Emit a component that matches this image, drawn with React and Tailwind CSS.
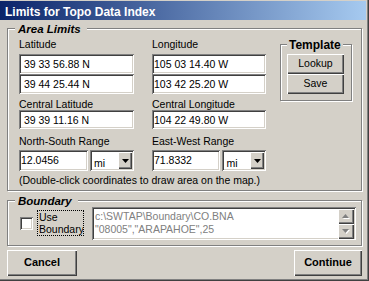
import React from "react";

const sunken =
  "shadow-[inset_1px_1px_0_#808080,inset_-1px_-1px_0_#ffffff,inset_2px_2px_0_#404040,inset_-2px_-2px_0_#d4d0c8]";
const raised =
  "shadow-[inset_1px_1px_0_#ffffff,inset_-1px_-1px_0_#404040,inset_-2px_-2px_0_#808080]";
const etched =
  "border border-[#808080] shadow-[inset_1px_1px_0_#ffffff,1px_1px_0_#ffffff]";

function Field({ value, h = "h-[20px]", w = "w-full" }) {
  return (
    <div className={`${w} ${h} bg-white ${sunken} pl-[2px] leading-[20px] whitespace-pre`}>
      {value}
    </div>
  );
}

function Combo() {
  return (
    <div className={`w-[44px] h-[21px] bg-white ${sunken} flex`}>
      <span className="pl-[4px] pt-[7px] leading-[12px]">mi</span>
      <div className={`ml-auto mr-[2px] mt-[2px] w-[14px] h-[17px] bg-[#d4d0c8] ${raised} flex items-center justify-center`}>
        <svg width="7" height="4" viewBox="0 0 7 4">
          <polygon points="0,0 7,0 3.5,4" fill="#000" />
        </svg>
      </div>
    </div>
  );
}

function ScrollBtn({ up }) {
  return (
    <div className={`w-[16px] h-[15px] bg-[#d4d0c8] ${raised} flex items-center justify-center`}>
      <svg width="8" height="5" viewBox="0 0 8 5">
        {up ? (
          <>
            <polygon points="1,5 8,5 4.5,1" fill="#ffffff" />
            <polygon points="0,4 7,4 3.5,0" fill="#808080" />
          </>
        ) : (
          <>
            <polygon points="1,1 8,1 4.5,5" fill="#ffffff" />
            <polygon points="0,0 7,0 3.5,4" fill="#808080" />
          </>
        )}
      </svg>
    </div>
  );
}

function Button({ children, w, bold }) {
  return (
    <div
      className={`${w} bg-[#d4d0c8] ${raised} flex items-center justify-center pb-[1px] ${
        bold ? "font-bold text-[11px]" : ""
      }`}
    >
      {children}
    </div>
  );
}

export default function App() {
  return (
    <div className="w-[369px] h-[281px] overflow-hidden bg-[#d4d0c8] font-['Liberation_Sans',Arial,sans-serif] text-[10.5px] text-black shadow-[inset_-1px_-1px_0_#404040,inset_-2px_-2px_0_#808080]">
      {/* Title bar */}
      <div className="mt-[1px] h-[19px] w-[366px] bg-linear-to-r/srgb from-[#0a246a] to-[#a6caf0] pl-[5px] pt-[4px] text-[12px] font-bold leading-[14px] text-white">
        Limits for Topo Data Index
      </div>

      {/* Area Limits */}
      <div className={`relative ml-[7px] mt-[8px] w-[355px] h-[163px] ${etched} pl-[11px] pt-[9px]`}>
        <span className="absolute left-[7px] top-[-6px] bg-[#d4d0c8] pl-[3px] pr-[6px] text-[11.5px] font-bold italic leading-[13px]">
          Area Limits
        </span>
        <div className="flex">
          <div className="flex flex-col">
            <div className="flex gap-[18px] leading-[12px]">
              <div className="w-[115px]">Latitude</div>
              <div className="w-[114px]">Longitude</div>
            </div>
            <div className="mt-[4px] flex gap-[18px]">
              <div className="w-[115px]">
                <Field value=" 39 33 56.88 N" />
                <Field value=" 39 44 25.44 N" />
              </div>
              <div className="w-[114px]">
                <Field value="105 03 14.40 W" />
                <Field value="103 42 25.20 W" />
              </div>
            </div>
            <div className="mt-[5px] flex gap-[18px] leading-[11px]">
              <div className="w-[115px]">Central Latitude</div>
              <div className="w-[114px]">Central Longitude</div>
            </div>
            <div className="flex gap-[18px]">
              <Field value=" 39 39 11.16 N" h="h-[19px]" w="w-[115px]" />
              <Field value="104 22 49.80 W" h="h-[19px]" w="w-[114px]" />
            </div>
            <div className="mt-[6px] flex gap-[18px] leading-[12px]">
              <div className="w-[115px]">North-South Range</div>
              <div className="w-[114px]">East-West Range</div>
            </div>
            <div className="mt-[3px] flex gap-[18px]">
              <div className="w-[115px] flex gap-[2px]">
                <Field value="12.0456" h="h-[21px]" w="w-[69px]" />
                <Combo />
              </div>
              <div className="w-[114px] flex gap-[2px]">
                <Field value="71.8332" h="h-[21px]" w="w-[69px]" />
                <Combo />
              </div>
            </div>
            <div className="mt-[3px] leading-[12px] whitespace-nowrap">
              (Double-click coordinates to draw area on the map.)
            </div>
          </div>

          {/* Template */}
          <div className={`relative ml-[14px] mt-[6px] w-[72px] h-[57px] ${etched} pl-[6px] pt-[9px]`}>
            <span className="absolute left-[6px] top-[-7px] bg-[#d4d0c8] px-[2px] text-[12px] font-bold leading-[14px]">
              Template
            </span>
            <div className="flex flex-col w-[57px]">
              <div className={`h-[20px] bg-[#d4d0c8] ${raised} flex items-center justify-center pb-[1px]`}>
                Lookup
              </div>
              <div className={`h-[20px] bg-[#d4d0c8] ${raised} flex items-center justify-center pb-[1px]`}>
                Save
              </div>
            </div>
          </div>
        </div>
      </div>

      {/* Boundary */}
      <div className={`relative ml-[7px] mt-[9px] w-[355px] h-[46px] ${etched} pl-[12px] flex items-center`}>
        <span className="absolute left-[7px] top-[-6px] bg-[#d4d0c8] pl-[3px] pr-[6px] text-[11.5px] font-bold italic leading-[13px]">
          Boundary
        </span>
        <div className={`w-[13px] h-[13px] bg-white ${sunken}`} />
        <div className="ml-[4px] w-[47px] h-[26px] overflow-hidden border border-dotted border-black pl-[1px] leading-[12px] whitespace-nowrap">
          <div>Use</div>
          <div>Boundary</div>
        </div>
        <div className={`ml-[8px] w-[264px] h-[33px] bg-white ${sunken} flex`}>
          <div className="pl-[3px] pt-[3px] leading-[13px] text-[#808080] whitespace-nowrap">
            <div>{"c:\\SWTAP\\Boundary\\CO.BNA"}</div>
            <div>{'"08005","ARAPAHOE",25'}</div>
          </div>
          <div className="ml-auto mr-[2px] mt-[2px] flex flex-col">
            <ScrollBtn up />
            <ScrollBtn />
          </div>
        </div>
      </div>

      {/* Buttons */}
      <div className="ml-[7px] mt-[4px] w-[355px] h-[26px] flex justify-between">
        <Button w="w-[70px]" bold>
          Cancel
        </Button>
        <Button w="w-[68px]" bold>
          Continue
        </Button>
      </div>
    </div>
  );
}
